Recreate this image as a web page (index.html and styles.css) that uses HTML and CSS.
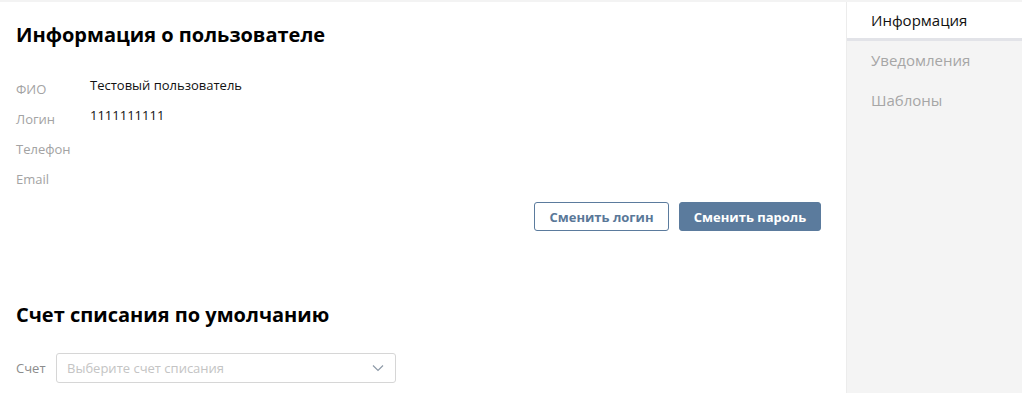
FILE: index.html
```html
<!DOCTYPE html>
<html lang="ru">
<head>
<meta charset="utf-8">
<title>Профиль</title>
<link rel="stylesheet" href="styles.css">
</head>
<body>
<div class="page">
  <main class="main">
    <section class="info">
      <h2 class="title">Информация о пользователе</h2>
      <div class="fields">
        <div class="row"><span class="label">ФИО</span><span class="value">Тестовый пользователь</span></div>
        <div class="row"><span class="label">Логин</span><span class="value">1111111111</span></div>
        <div class="row"><span class="label">Телефон</span><span class="value"></span></div>
        <div class="row"><span class="label">Email</span><span class="value"></span></div>
      </div>
      <div class="actions">
        <button class="btn btn-outline">Сменить логин</button>
        <button class="btn btn-primary">Сменить пароль</button>
      </div>
    </section>
    <section class="account">
      <h2 class="title">Счет списания по умолчанию</h2>
      <div class="select-row">
        <span class="label">Счет</span>
        <div class="select">
          <span class="placeholder">Выберите счет списания</span>
          <svg class="chevron" width="12" height="8" viewBox="0 0 12 8"><path d="M1 1.5 L6 6.5 L11 1.5" fill="none" stroke="#8e9aa8" stroke-width="1.2"/></svg>
        </div>
      </div>
    </section>
  </main>
  <nav class="side">
    <a class="nav-item active">Информация</a>
    <a class="nav-item">Уведомления</a>
    <a class="nav-item">Шаблоны</a>
  </nav>
</div>
</body>
</html>
```
FILE: styles.css
```css
* { box-sizing: border-box; }
html, body { margin: 0; padding: 0; }
body {
  font-family: "Open Sans", "Noto Sans", sans-serif;
  color: #000;
  background: #fff;
  width: 1022px;
  height: 393px;
  overflow: hidden;
}
.page {
  display: flex;
  height: 393px;
  border-top: 2px solid #f3f3f3;
}
.main {
  flex: 1;
  padding: 0 25px 0 16px;
}
.title {
  margin: 0;
  font-size: 20px;
  font-weight: 700;
  line-height: 28px;
}
.info .title { padding-top: 19px; }
.fields { margin-top: 31px; }
.row {
  display: flex;
  height: 30px;
  align-items: flex-start;
}
.label {
  width: 74px;
  font-size: 13px;
  color: #a3a3a3;
  line-height: 18px;
}
.value {
  font-size: 13px;
  line-height: 18px;
  margin-top: -4px;
  color: #111;
}
.actions {
  display: flex;
  justify-content: flex-end;
  gap: 10px;
  margin-top: 2px;
}
.btn {
  font-family: inherit;
  font-size: 13px;
  font-weight: 700;
  height: 29px;
  border-radius: 3px;
  padding: 0;
  white-space: nowrap;
  cursor: pointer;
}
.btn-outline {
  background: #fff;
  color: #5a7898;
  border: 1px solid #5b7b9d;
  width: 135px;
}
.btn-primary {
  background: #5b7b9d;
  color: #fff;
  border: 1px solid #5b7b9d;
  width: 142px;
}
.account { margin-top: 70px; }
.select-row {
  display: flex;
  align-items: center;
  margin-top: 24px;
}
.select-row .label {
  width: 40px;
  color: #8c8c8c;
}
.select {
  width: 340px;
  height: 30px;
  border: 1px solid #d6d6d6;
  border-radius: 3px;
  display: flex;
  align-items: center;
  justify-content: space-between;
  padding: 0 11px 0 10px;
}
.placeholder {
  font-size: 13px;
  color: #c4c4c4;
}
.side {
  width: 176px;
  background: #f4f4f4;
  border-left: 1px solid #ececec;
  display: flex;
  flex-direction: column;
}
.nav-item {
  display: block;
  height: 40px;
  line-height: 38px;
  padding-left: 24px;
  font-size: 15px;
  color: #a6a6a6;
}
.nav-item.active {
  background: #fff;
  color: #111;
  border-bottom: 3px solid #e2e3e8;
  height: 39px;
  line-height: 36px;
}
```
